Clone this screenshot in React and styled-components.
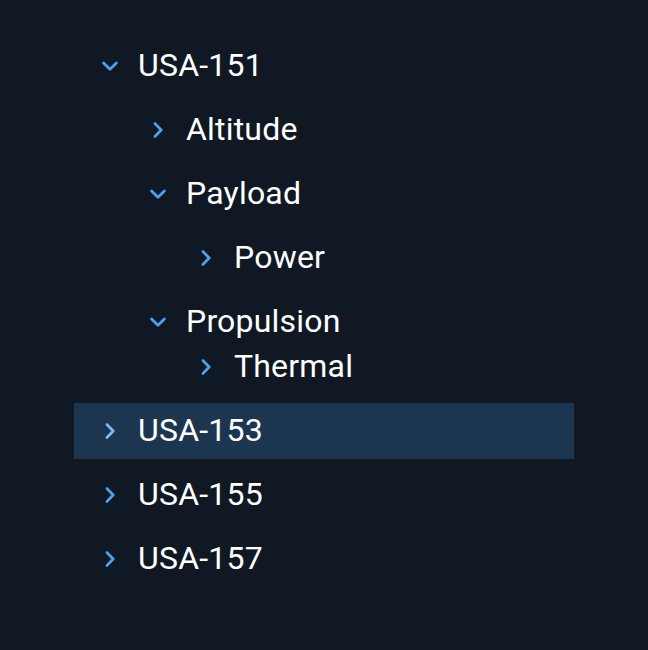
import React from 'react'
import styled, { createGlobalStyle } from 'styled-components'

const GlobalStyle = createGlobalStyle`
  html, body {
    margin: 0;
    padding: 0;
    background: #101923;
    font-family: Roboto, 'Liberation Sans', sans-serif;
  }
`

const tree = [
  {
    label: 'USA-151',
    open: true,
    children: [
      { label: 'Altitude' },
      { label: 'Payload', open: true, children: [{ label: 'Power' }] },
      { label: 'Propulsion', open: true, tight: true, children: [{ label: 'Thermal' }] },
    ],
  },
  { label: 'USA-153', selected: true },
  { label: 'USA-155' },
  { label: 'USA-157' },
]

const Chevron = ({ open, light }) => (
  <svg width="24" height="24" viewBox="0 0 24 24" fill="none">
    <path
      d={open ? 'M5.6 9 L12 15.2 L18.4 9' : 'M9 5.6 L15.2 12 L9 18.4'}
      stroke={light ? '#7cbcf4' : '#4aa3f2'}
      strokeWidth="2.8"
      strokeLinecap="round"
      strokeLinejoin="round"
    />
  </svg>
)

const Node = ({ node, level }) => (
  <>
    <Row $level={level} $selected={node.selected}>
      <Icon>
        <Chevron open={node.open} light={node.selected} />
      </Icon>
      <Label>{node.label}</Label>
    </Row>
    {node.open && node.children && (
      <Group $tight={node.tight}>
        {node.children.map((c) => (
          <Node key={c.label} node={c} level={level + 1} />
        ))}
      </Group>
    )}
  </>
)

export default function App() {
  return (
    <Page>
      <GlobalStyle />
      <Tree>
        {tree.map((n) => (
          <Node key={n.label} node={n} level={0} />
        ))}
      </Tree>
    </Page>
  )
}

const Page = styled.div`
  width: 648px;
  height: 650px;
  padding: 38px 0 0 74px;
  box-sizing: border-box;
  background: #101923;
`

const Tree = styled.div`
  width: 500px;
  display: flex;
  flex-direction: column;
  gap: 8px;
`

const Group = styled.div`
  display: flex;
  flex-direction: column;
  gap: 8px;
  margin-top: ${(p) => (p.$tight ? '-19px' : '0')};
`

const Row = styled.div`
  height: 56px;
  display: flex;
  align-items: center;
  padding-left: ${(p) => 24 + p.$level * 48}px;
  background: ${(p) => (p.$selected ? '#1c3650' : 'transparent')};
`

const Icon = styled.span`
  width: 24px;
  height: 24px;
  display: flex;
  margin-right: 16px;
`

const Label = styled.span`
  color: #ffffff;
  font-size: 32px;
  line-height: 1;
  letter-spacing: 0.2px;
  padding-bottom: 2px;
`
